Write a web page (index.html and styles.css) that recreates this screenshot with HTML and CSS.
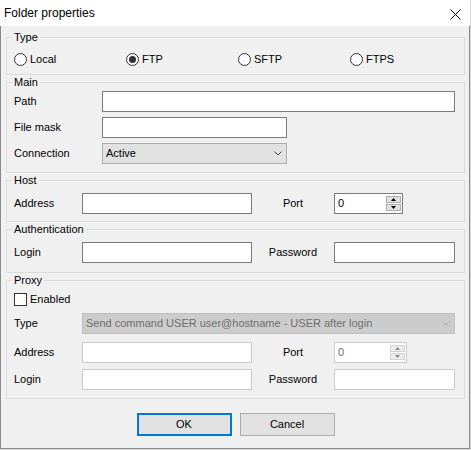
FILE: index.html
```html
<!DOCTYPE html>
<html>
<head>
<meta charset="utf-8">
<title>Folder properties</title>
<link rel="stylesheet" href="styles.css">
</head>
<body>
<div class="window">
  <div class="titlebar">
    <span class="title">Folder properties</span>
    <span class="close"><svg width="11" height="11" viewBox="0 0 11 11"><path d="M0.5 0.5L10.5 10.5M10.5 0.5L0.5 10.5" stroke="#000" stroke-width="1" fill="none"/></svg></span>
  </div>
  <div class="client">
    <div class="group g-type">
      <span class="gtitle">Type</span>
      <div class="radios">
        <label class="radio"><span class="rb"></span>Local</label>
        <label class="radio"><span class="rb on"></span>FTP</label>
        <label class="radio"><span class="rb"></span>SFTP</label>
        <label class="radio"><span class="rb"></span>FTPS</label>
      </div>
    </div>

    <div class="group g-main">
      <span class="gtitle">Main</span>
      <div class="row"><span class="lab w88">Path</span><input class="edit fill" type="text"></div>
      <div class="row mt5"><span class="lab w88">File mask</span><input class="edit w185" type="text"></div>
      <div class="row mt5"><span class="lab w88">Connection</span>
        <div class="combo w185"><span class="ctext">Active</span>
          <svg class="chev" width="8" height="5" viewBox="0 0 8 5"><polyline points="0.5,0.5 4,4 7.5,0.5" fill="none" stroke="#444" stroke-width="1"/></svg>
        </div>
      </div>
    </div>

    <div class="group g-host">
      <span class="gtitle">Host</span>
      <div class="row"><span class="lab w68">Address</span><input class="edit w170" type="text"><span class="lab mid">Port</span>
        <div class="spin"><span class="sval">0</span>
          <span class="sbtns">
            <span class="sb"><svg width="5" height="3" viewBox="0 0 5 3"><polygon points="0,3 5,3 2.5,0" fill="#000"/></svg></span>
            <span class="sb"><svg width="5" height="3" viewBox="0 0 5 3"><polygon points="0,0 5,0 2.5,3" fill="#000"/></svg></span>
          </span>
        </div>
      </div>
    </div>

    <div class="group g-auth">
      <span class="gtitle">Authentication</span>
      <div class="row"><span class="lab w68">Login</span><input class="edit w170" type="text"><span class="lab mid">Password</span><input class="edit fill" type="password"></div>
    </div>

    <div class="group g-proxy">
      <span class="gtitle">Proxy</span>
      <label class="check"><span class="cb"></span>Enabled</label>
      <div class="row mt7"><span class="lab w68">Type</span>
        <div class="combo dis fill"><span class="ctext">Send command USER user@hostname - USER after login</span>
          <svg class="chev" width="8" height="5" viewBox="0 0 8 5"><polyline points="0.5,0.5 4,4 7.5,0.5" fill="none" stroke="#a8a8a8" stroke-width="1"/></svg>
        </div>
      </div>
      <div class="row mt8"><span class="lab w68">Address</span><input class="edit dis w170" type="text" disabled><span class="lab mid">Port</span>
        <div class="spin dis"><span class="sval">0</span>
          <span class="sbtns">
            <span class="sb"><svg width="5" height="3" viewBox="0 0 5 3"><polygon points="0,3 5,3 2.5,0" fill="#8a8a8a"/></svg></span>
            <span class="sb"><svg width="5" height="3" viewBox="0 0 5 3"><polygon points="0,0 5,0 2.5,3" fill="#8a8a8a"/></svg></span>
          </span>
        </div>
      </div>
      <div class="row mt6"><span class="lab w68">Login</span><input class="edit dis w170" type="text" disabled><span class="lab mid">Password</span><input class="edit dis fill" type="password" disabled></div>
    </div>

    <div class="buttons">
      <div class="btn default">OK</div>
      <div class="btn">Cancel</div>
    </div>
  </div>
</div>
</body>
</html>
```

FILE: styles.css
```css
* { box-sizing: border-box; }
html, body { margin: 0; padding: 0; }
body {
  width: 471px;
  height: 450px;
  background: #d8d8d8;
  font-family: "Liberation Sans", Arial, sans-serif;
  font-size: 11px;
  line-height: 13px;
  color: #000;
}
.window {
  width: 470px;
  height: 449px;
  background: #f0f0f0;
  display: flex;
  flex-direction: column;
}
.titlebar {
  height: 26px;
  flex: none;
  background: #fff;
  display: flex;
  align-items: flex-start;
}
.title {
  font-size: 12px;
  line-height: 26px;
  padding-left: 4px;
}
.close {
  margin-left: auto;
  margin-right: 9px;
  margin-top: 9px;
  display: block;
  width: 11px;
  height: 11px;
}
svg { display: block; }
.client {
  flex: 1;
  border: 1px solid #8a8a8a;
  border-top: none;
  padding: 11px 4px 12px 5px;
  display: flex;
  flex-direction: column;
  gap: 7px;
}
.group {
  position: relative;
  border: 1px solid #dcdcdc;
  padding: 12px 9px 8px 7px;
  display: flex;
  flex-direction: column;
}
.gtitle {
  position: absolute;
  top: -7px;
  left: 5px;
  padding: 0 2px;
  background: #f0f0f0;
  line-height: 13px;
}
.g-type { padding-top: 15px; padding-bottom: 8px; }
.g-main { padding-top: 8px; padding-bottom: 8px; }
.g-host { padding-top: 12px; padding-bottom: 7px; }
.g-auth { padding-top: 12px; padding-bottom: 9px; }
.g-proxy { padding-top: 12px; padding-bottom: 8px; }

.radios {
  display: grid;
  grid-template-columns: repeat(4, 112px);
  height: 13px;
}
.radio, .check {
  display: flex;
  align-items: center;
  height: 13px;
}
.rb {
  width: 13px;
  height: 13px;
  border: 1px solid #333;
  border-radius: 50%;
  background: #fff;
  margin-right: 3px;
  position: relative;
  flex: none;
}
.rb.on::after {
  content: "";
  position: absolute;
  left: 2px;
  top: 2px;
  width: 7px;
  height: 7px;
  border-radius: 50%;
  background: #333;
}
.cb {
  width: 13px;
  height: 13px;
  border: 1px solid #333;
  background: #fff;
  margin-right: 3px;
  flex: none;
}

.row {
  display: flex;
  align-items: center;
  height: 21px;
}
.mt5 { margin-top: 5px; }
.mt6 { margin-top: 6px; }
.mt7 { margin-top: 7px; }
.mt8 { margin-top: 8px; }
.lab { flex: none; white-space: nowrap; }
.w88 { width: 88px; }
.w68 { width: 68px; }
.mid { width: 82px; text-align: center; }
.w185 { width: 185px; flex: none; }
.w170 { width: 170px; flex: none; }
.fill { flex: 1; min-width: 0; }

.edit {
  height: 21px;
  margin: 0;
  padding: 0 3px;
  border: 1px solid #7a7a7a;
  background: #fff;
  font: inherit;
  outline: none;
  border-radius: 0;
}
.edit.dis { border-color: #cccccc; }

.combo {
  display: flex;
  align-items: center;
  height: 21px;
  border: 1px solid #adadad;
  background: #e1e1e1;
  padding: 0 4px 0 3px;
}
.ctext { flex: 1; white-space: nowrap; overflow: hidden; }
.chev { flex: none; }
.combo.dis {
  background: #cccccc;
  border-color: #bfbfbf;
  color: #6d6d6d;
}

.spin {
  display: flex;
  align-items: center;
  width: 69px;
  height: 21px;
  flex: none;
  border: 1px solid #7a7a7a;
  background: #fff;
  padding-left: 3px;
}
.spin.dis {
  width: 73px;
  border-color: #cccccc;
  color: #6d6d6d;
}
.sval { flex: 1; }
.sbtns {
  display: flex;
  flex-direction: column;
  gap: 1px;
  margin-right: 1px;
}
.sb {
  width: 15px;
  height: 7px;
  border: 1px solid #adadad;
  background: #e1e1e1;
  display: flex;
  align-items: center;
  justify-content: center;
}
.spin.dis .sb {
  border-color: #d4d4d4;
  background: #ececec;
}

.buttons {
  display: flex;
  justify-content: center;
  gap: 8px;
  margin-top: 7px;
}
.btn {
  width: 95px;
  height: 23px;
  border: 1px solid #adadad;
  background: #e1e1e1;
  display: flex;
  align-items: center;
  justify-content: center;
}
.btn.default { border: 2px solid #0078d7; }
```
